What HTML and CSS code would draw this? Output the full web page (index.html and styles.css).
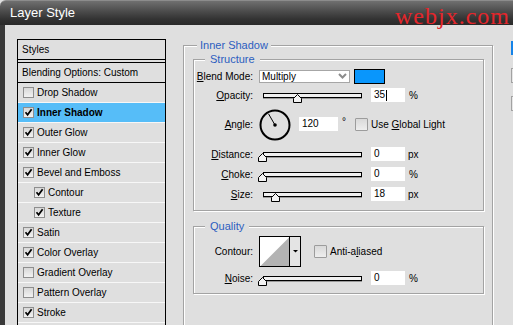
FILE: index.html
```html
<!DOCTYPE html>
<html>
<head>
<meta charset="utf-8">
<link rel="stylesheet" href="styles.css">
</head>
<body>
<div class="window">
  <div class="titlebar">Layer Style</div>
  <div class="watermark">webjx.com</div>
  <div class="main">
    <div class="styles">
      <div class="styles-head">Styles</div>
      <div class="blend-opts">Blending Options: Custom</div>
      <ul class="fx-list">
        <li class="fx"><span class="cb"></span>Drop Shadow</li>
        <li class="fx sel"><span class="cb"><svg viewBox="0 0 9 9" width="9" height="9"><path d="M1.5 4.2 L3.6 6.8 L7.6 1.2" fill="none" stroke="#000" stroke-width="1.7"/></svg></span>Inner Shadow</li>
        <li class="fx"><span class="cb"><svg viewBox="0 0 9 9" width="9" height="9"><path d="M1.5 4.2 L3.6 6.8 L7.6 1.2" fill="none" stroke="#000" stroke-width="1.7"/></svg></span>Outer Glow</li>
        <li class="fx"><span class="cb"><svg viewBox="0 0 9 9" width="9" height="9"><path d="M1.5 4.2 L3.6 6.8 L7.6 1.2" fill="none" stroke="#000" stroke-width="1.7"/></svg></span>Inner Glow</li>
        <li class="fx"><span class="cb"><svg viewBox="0 0 9 9" width="9" height="9"><path d="M1.5 4.2 L3.6 6.8 L7.6 1.2" fill="none" stroke="#000" stroke-width="1.7"/></svg></span>Bevel and Emboss</li>
        <li class="fx sub"><span class="cb"><svg viewBox="0 0 9 9" width="9" height="9"><path d="M1.5 4.2 L3.6 6.8 L7.6 1.2" fill="none" stroke="#000" stroke-width="1.7"/></svg></span>Contour</li>
        <li class="fx sub"><span class="cb"><svg viewBox="0 0 9 9" width="9" height="9"><path d="M1.5 4.2 L3.6 6.8 L7.6 1.2" fill="none" stroke="#000" stroke-width="1.7"/></svg></span>Texture</li>
        <li class="fx"><span class="cb"><svg viewBox="0 0 9 9" width="9" height="9"><path d="M1.5 4.2 L3.6 6.8 L7.6 1.2" fill="none" stroke="#000" stroke-width="1.7"/></svg></span>Satin</li>
        <li class="fx"><span class="cb"><svg viewBox="0 0 9 9" width="9" height="9"><path d="M1.5 4.2 L3.6 6.8 L7.6 1.2" fill="none" stroke="#000" stroke-width="1.7"/></svg></span>Color Overlay</li>
        <li class="fx"><span class="cb"></span>Gradient Overlay</li>
        <li class="fx"><span class="cb"></span>Pattern Overlay</li>
        <li class="fx"><span class="cb"><svg viewBox="0 0 9 9" width="9" height="9"><path d="M1.5 4.2 L3.6 6.8 L7.6 1.2" fill="none" stroke="#000" stroke-width="1.7"/></svg></span>Stroke</li>
        <li class="fx-rest"></li>
      </ul>
    </div>

    <div class="panel">
      <fieldset class="group outer">
        <legend class="lg-outer">Inner Shadow</legend>

        <fieldset class="group inner structure">
          <legend class="lg-inner">Structure</legend>
          <div class="row r20">
            <span class="lbl"><u>B</u>lend Mode:</span>
            <div class="select"><span>Multiply</span><svg width="9" height="6" viewBox="0 0 9 6"><polyline points="1,1 4.5,4.5 8,1" fill="none" stroke="#8c8c8c" stroke-width="2"/></svg></div>
            <span class="swatch"></span>
          </div>
          <div class="row r18">
            <span class="lbl"><u>O</u>pacity:</span>
            <div class="slider"><svg class="thumb" style="left:29px" width="9" height="9" viewBox="0 0 9 9"><polygon points="4.5,0.5 8.5,4.5 8.5,8.5 0.5,8.5 0.5,4.5" fill="#f2f2f2" stroke="#000"/></svg></div>
            <span class="num">35<span class="caret"></span></span>
            <span class="unit">%</span>
          </div>
          <div class="row r40">
            <span class="lbl"><u>A</u>ngle:</span>
            <svg class="dial" width="32" height="32" viewBox="0 0 32 32"><circle cx="16" cy="16" r="14.5" fill="none" stroke="#000" stroke-width="2"/><line x1="16" y1="16" x2="9.5" y2="4.8" stroke="#000" stroke-width="1"/><circle cx="16" cy="16" r="1.8" fill="#000"/></svg>
            <span class="num wide">120</span>
            <span class="deg">°</span>
            <span class="bigcb"></span>
            <span class="cblabel">Use <u>G</u>lobal Light</span>
          </div>
          <div class="row r20">
            <span class="lbl"><u>D</u>istance:</span>
            <div class="slider"><svg class="thumb" style="left:-6px" width="9" height="9" viewBox="0 0 9 9"><polygon points="4.5,0.5 8.5,4.5 8.5,8.5 0.5,8.5 0.5,4.5" fill="#f2f2f2" stroke="#000"/></svg></div>
            <span class="num">0</span>
            <span class="unit px">px</span>
          </div>
          <div class="row r20">
            <span class="lbl"><u>C</u>hoke:</span>
            <div class="slider"><svg class="thumb" style="left:-6px" width="9" height="9" viewBox="0 0 9 9"><polygon points="4.5,0.5 8.5,4.5 8.5,8.5 0.5,8.5 0.5,4.5" fill="#f2f2f2" stroke="#000"/></svg></div>
            <span class="num">0</span>
            <span class="unit">%</span>
          </div>
          <div class="row r20">
            <span class="lbl"><u>S</u>ize:</span>
            <div class="slider"><svg class="thumb" style="left:7px" width="9" height="9" viewBox="0 0 9 9"><polygon points="4.5,0.5 8.5,4.5 8.5,8.5 0.5,8.5 0.5,4.5" fill="#f2f2f2" stroke="#000"/></svg></div>
            <span class="num">18</span>
            <span class="unit px">px</span>
          </div>
        </fieldset>

        <fieldset class="group inner quality">
          <legend class="lg-inner">Quality</legend>
          <div class="row r37">
            <span class="lbl">Contour:</span>
            <svg class="contour" width="42" height="31" viewBox="0 0 42 31">
              <rect x="0.5" y="0.5" width="41" height="30" fill="#fff" stroke="#000"/>
              <polygon points="1.5,30 30,1.5 30,30" fill="#b3b3b3"/>
              <rect x="31" y="1" width="10" height="29" fill="#e4e4e4"/>
              <line x1="30.5" y1="1" x2="30.5" y2="30" stroke="#000"/>
              <polygon points="34,14 39,14 36.5,16.5" fill="#000"/>
            </svg>
            <span class="bigcb cb-aa"></span>
            <span class="cblabel">Anti-a<u>l</u>iased</span>
          </div>
          <div class="row r16">
            <span class="lbl"><u>N</u>oise:</span>
            <div class="slider"><svg class="thumb" style="left:-6px" width="9" height="9" viewBox="0 0 9 9"><polygon points="4.5,0.5 8.5,4.5 8.5,8.5 0.5,8.5 0.5,4.5" fill="#f2f2f2" stroke="#000"/></svg></div>
            <span class="num">0</span>
            <span class="unit">%</span>
          </div>
        </fieldset>
      </fieldset>
    </div>

    <div class="buttons">
      <div class="btn default"></div>
      <div class="btn"></div>
      <div class="btn"></div>
    </div>
  </div>
</div>
</body>
</html>
```

FILE: styles.css
```css
html, body {
  margin: 0;
  padding: 0;
}
body {
  width: 513px;
  height: 325px;
  overflow: hidden;
  background: #dfdfdf;
  font-family: "Liberation Sans", Arial, sans-serif;
  font-size: 10px;
  color: #000;
}
.window {
  position: relative;
  height: 325px;
  overflow: hidden;
}
.titlebar {
  height: 25px;
  box-sizing: border-box;
  padding-left: 10px;
  line-height: 24px;
  font-size: 13px;
  color: #fff;
  background: linear-gradient(#707070, #4e4e4e 40%, #333 75%, #2a2a2a);
  border-radius: 6px 0 0 0;
  border-top: 1px solid #8c8c8c;
}
.watermark {
  position: absolute;
  left: 395px;
  top: 3px;
  font-family: "Liberation Serif", serif;
  font-size: 24px;
  line-height: 26px;
  letter-spacing: 1px;
  color: #e4262b;
}
.main {
  display: flex;
  height: 300px;
  overflow: hidden;
  border-left: 5px solid #393939;
}
/* Styles list */
.styles {
  flex: none;
  width: 149px;
  box-sizing: border-box;
  margin: 14px 0 0 12px;
  border: 1px solid #000;
  border-bottom: none;
  align-self: flex-start;
}
.styles-head, .blend-opts {
  height: 19px;
  line-height: 19px;
  padding-left: 4px;
}
.styles-head {
  border-bottom: 4px double #000;
}
.blend-opts {
  border-bottom: 1px solid #000;
}
.fx-list {
  list-style: none;
  margin: 0;
  padding: 0;
}
.fx {
  height: 19px;
  display: flex;
  align-items: center;
  padding-left: 5px;
  border-bottom: 1px solid #f7f7f7;
}
.fx-rest {
  height: 2px;
}
.fx.sub {
  padding-left: 16px;
}
.fx.sel {
  background: #56bdf8;
  font-weight: bold;
}
.cb {
  flex: none;
  width: 11px;
  height: 11px;
  box-sizing: border-box;
  margin-right: 3px;
  border: 1px solid #8e8e8e;
  background: linear-gradient(#d8d8d8, #f2f2f2);
  display: flex;
  align-items: center;
  justify-content: center;
}
/* Right panel */
.panel {
  flex: none;
  width: 310px;
  margin: 13px 0 0 17px;
}
fieldset.group {
  margin: 0;
  min-width: 0;
  border: 1px solid #a3a3a3;
  box-shadow: inset 1px 1px 0 #fff, 1px 1px 0 #fff;
}
fieldset.outer {
  padding: 0 8px 0 9px;
  height: 288px;
  box-sizing: border-box;
}
fieldset.inner {
  padding: 0 0 6px 0;
}
fieldset.quality {
  margin-top: 8px;
  padding-bottom: 7px;
}
legend {
  font-size: 11px;
  line-height: 14px;
  color: #2c5ec0;
  background: #dfdfdf;
}
.lg-outer {
  margin-left: 4px;
  padding: 0 3px;
}
.lg-inner {
  margin-left: 11px;
  padding: 0 5px;
}
.row {
  display: flex;
  align-items: center;
}
.r20 { height: 20px; }
.r18 { height: 18px; }
.r40 { height: 40px; }
.r37 { height: 37px; }
.r16 { height: 16px; }
.lbl {
  flex: none;
  width: 59px;
  text-align: right;
}
.select {
  flex: none;
  margin-left: 6px;
  width: 91px;
  height: 13px;
  box-sizing: border-box;
  border: 1px solid #a6a6a6;
  background: #fff;
  display: flex;
  align-items: center;
  justify-content: space-between;
  padding: 0 2px 0 2px;
  line-height: 11px;
}
.swatch {
  flex: none;
  margin-left: 4px;
  width: 31px;
  height: 15px;
  box-sizing: border-box;
  border: 1px solid #000;
  background: #0996fc;
}
.slider {
  position: relative;
  flex: none;
  margin-left: 10px;
  width: 99px;
  height: 5px;
  box-sizing: border-box;
  border: 1px solid #000;
  background: #f0f0f0;
  box-shadow: 0 1px 0 #9a9a9a;
}
.thumb {
  position: absolute;
  top: 0;
  display: block;
}
.num {
  flex: none;
  margin-left: 9px;
  width: 34px;
  height: 14px;
  box-sizing: border-box;
  padding-left: 3px;
  background: #fff;
  line-height: 14px;
  display: flex;
  align-items: center;
}
.num.wide {
  margin-left: 8px;
  width: 39px;
}
.caret {
  display: inline-block;
  width: 1px;
  height: 11px;
  margin-left: 1px;
  background: #000;
}
.unit {
  margin-left: 4px;
}
.unit.px {
  margin-left: 3px;
}
.dial {
  flex: none;
  margin-left: 6px;
  margin-top: 2px;
}
.deg {
  margin-left: 4px;
  align-self: flex-start;
  margin-top: 13px;
  line-height: 10px;
}
.bigcb {
  flex: none;
  margin-left: 9px;
  width: 13px;
  height: 13px;
  box-sizing: border-box;
  border: 1px solid #9c9c9c;
  border-radius: 1px;
  background: linear-gradient(#d9d9d9, #eeeeee);
}
.bigcb.cb-aa {
  margin-left: 13px;
}
.cblabel {
  margin-left: 3px;
}
.contour {
  flex: none;
  margin-left: 6px;
  display: block;
}
/* Buttons (cut off at right edge) */
.buttons {
  flex: none;
  margin: 16px 0 0 18px;
  display: flex;
  flex-direction: column;
}
.btn {
  width: 80px;
  height: 15px;
  box-sizing: border-box;
  border: 1px solid #a2a2a2;
  background: #e6e6e6;
  margin-bottom: 13px;
}
.btn.default {
  height: 14px;
  border: 2px solid #1583e8;
}
```
